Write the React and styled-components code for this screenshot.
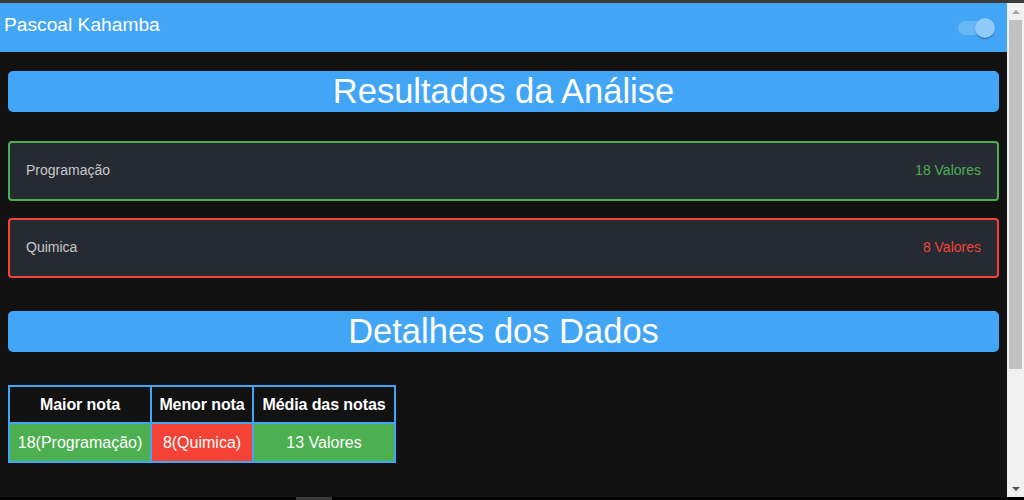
import React, { useState } from "react";
import styled, { createGlobalStyle } from "styled-components";

const GlobalStyle = createGlobalStyle`
  html, body {
    margin: 0;
    padding: 0;
    background: #121212;
    font-family: "Liberation Sans", Arial, sans-serif;
    overflow: hidden;
  }
`;

const materias = [
  { nome: "Programação", nota: 18 },
  { nome: "Quimica", nota: 8 },
];

// visible share of the page in the scroll bar
const visivel = 0.759;

const App = () => {
  const [dark, setDark] = useState(true);
  const maior = materias.reduce((a, b) => (b.nota > a.nota ? b : a));
  const menor = materias.reduce((a, b) => (b.nota < a.nota ? b : a));
  const media = materias.reduce((s, m) => s + m.nota, 0) / materias.length;

  return (
    <Frame>
      <GlobalStyle />
      <TopEdge />
      <Viewport>
        <Page>
          <Header>
            <Brand>Pascoal Kahamba</Brand>
            <Switch onClick={() => setDark(!dark)}>
              <Track />
              <Thumb checked={dark} />
            </Switch>
          </Header>

          <SectionTitle top={19}>Resultados da Análise</SectionTitle>

          {materias.map((m, i) => (
            <Card key={m.nome} ok={m.nota >= 10} top={i === 0 ? 29 : 17}>
              <CardLabel>{m.nome}</CardLabel>
              <CardValue ok={m.nota >= 10}>{m.nota} Valores</CardValue>
            </Card>
          ))}

          <SectionTitle top={33}>Detalhes dos Dados</SectionTitle>

          <Grid>
            <HeadCell>Maior nota</HeadCell>
            <HeadCell>Menor nota</HeadCell>
            <HeadCell>Média das notas</HeadCell>
            <DataCell ok>
              {maior.nota}({maior.nome})
            </DataCell>
            <DataCell>
              {menor.nota}({menor.nome})
            </DataCell>
            <DataCell ok={media >= 10}>{media} Valores</DataCell>
          </Grid>
        </Page>
        <ScrollBar>
          <ScrollButton>
            <ArrowUp />
          </ScrollButton>
          <ScrollTrack>
            <ScrollThumb style={{ height: `${visivel * 100}%` }} />
          </ScrollTrack>
          <ScrollButton>
            <ArrowDown />
          </ScrollButton>
        </ScrollBar>
      </Viewport>
      <BottomEdge>
        <TaskPiece />
      </BottomEdge>
    </Frame>
  );
};

export default App;

const Frame = styled.div`
  width: 1024px;
  height: 500px;
  display: flex;
  flex-direction: column;
  overflow: hidden;
`;

const TopEdge = styled.div`
  height: 3px;
  flex: none;
  background: #3b3b3b;
`;

const BottomEdge = styled.div`
  height: 3px;
  flex: none;
  background: #000;
  display: flex;
`;

const TaskPiece = styled.div`
  margin-left: 296px;
  width: 36px;
  background: #3a3a3a;
`;

const Viewport = styled.div`
  height: 494px;
  flex: none;
  display: flex;
`;

const Page = styled.main`
  flex: 1;
  overflow: hidden;
`;

const ScrollBar = styled.div`
  width: 17px;
  flex: none;
  background: #f1f1f1;
  display: flex;
  flex-direction: column;
`;

const ScrollButton = styled.div`
  height: 17px;
  flex: none;
  display: flex;
  align-items: center;
  justify-content: center;
`;

const ArrowUp = styled.div`
  width: 0;
  height: 0;
  border-left: 4px solid transparent;
  border-right: 4px solid transparent;
  border-bottom: 4px solid #a3a3a3;
`;

const ArrowDown = styled.div`
  width: 0;
  height: 0;
  border-left: 4px solid transparent;
  border-right: 4px solid transparent;
  border-top: 4px solid #505050;
`;

const ScrollTrack = styled.div`
  flex: 1;
  padding: 0 2px;
`;

const ScrollThumb = styled.div`
  background: #c1c1c1;
`;

const Header = styled.header`
  height: 49px;
  background: #42a5f5;
  display: flex;
  align-items: center;
  justify-content: space-between;
  padding: 0 3px 0 4px;
`;

const Brand = styled.div`
  color: #fff;
  font-size: 19.2px;
  margin-top: -6px;
`;

const Switch = styled.div`
  width: 58px;
  height: 38px;
  padding: 12px;
  box-sizing: border-box;
  position: relative;
  cursor: pointer;
`;

const Track = styled.div`
  width: 34px;
  height: 14px;
  border-radius: 7px;
  background: #90caf9;
  opacity: 0.5;
`;

const Thumb = styled.div`
  position: absolute;
  top: 9px;
  left: ${(p) => (p.checked ? 29 : 9)}px;
  width: 20px;
  height: 20px;
  border-radius: 50%;
  background: #90caf9;
  box-shadow: 0 2px 1px -1px rgba(0, 0, 0, 0.2), 0 1px 1px 0 rgba(0, 0, 0, 0.14),
    0 1px 3px 0 rgba(0, 0, 0, 0.12);
`;

const SectionTitle = styled.h1`
  margin: ${(p) => p.top}px 8px 0;
  height: 41px;
  line-height: 41px;
  background: #42a5f5;
  border-radius: 5px;
  color: #fff;
  font-size: 34.5px;
  font-weight: normal;
  text-align: center;
`;

const Card = styled.div`
  margin: ${(p) => p.top}px 8px 0;
  height: 60px;
  box-sizing: border-box;
  border: 2px solid ${(p) => (p.ok ? "#4caf50" : "#f44336")};
  border-radius: 4px;
  background: #262a33;
  display: flex;
  align-items: center;
  justify-content: space-between;
  padding: 0 16px 3px;
  font-size: 14px;
`;

const CardLabel = styled.span`
  color: #c8c8c8;
`;

const CardValue = styled.span`
  color: ${(p) => (p.ok ? "#4caf50" : "#f44336")};
`;

const Grid = styled.div`
  margin: 33px 0 0 8px;
  width: max-content;
  display: grid;
  grid-template-columns: 140px 100px 140px;
  grid-template-rows: 35px 37px;
  gap: 2px;
  padding: 2px;
  background: #42a5f5;
`;

const HeadCell = styled.div`
  background: #121212;
  color: #fff;
  font-weight: bold;
  font-size: 16px;
  display: flex;
  align-items: center;
  justify-content: center;
  white-space: nowrap;
  letter-spacing: -0.1px;
`;

const DataCell = styled.div`
  background: ${(p) => (p.ok ? "#4caf50" : "#f44336")};
  color: #fff;
  font-size: 16px;
  display: flex;
  align-items: center;
  justify-content: center;
  white-space: nowrap;
`;
